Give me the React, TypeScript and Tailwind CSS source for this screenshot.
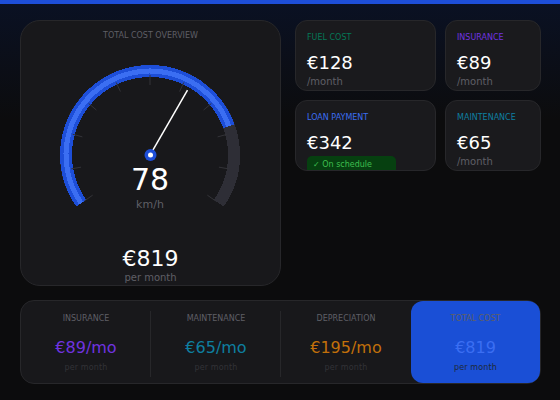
const FONT = "font-['DejaVu_Sans',sans-serif]"

const CX = 100
const CY = 95

function polar(r: number, deg: number) {
  const a = (deg * Math.PI) / 180
  return { x: CX + r * Math.cos(a), y: CY + r * Math.sin(a) }
}

function arc(r: number, from: number, to: number) {
  const s = polar(r, from)
  const e = polar(r, to)
  const large = to - from > 180 ? 1 : 0
  return `M ${s.x} ${s.y} A ${r} ${r} 0 ${large} 1 ${e.x} ${e.y}`
}

const TICKS = Array.from({ length: 11 }, (_, i) => 145 + i * 25)

function Gauge() {
  const end = 145 + 250 * 0.78
  const tip = polar(75, -60)
  return (
    <svg width="200" height="160" viewBox="0 0 200 160" className="block">
      <path d={arc(84, 145, 395)} fill="none" stroke="#2e2e36" strokeWidth="12" shapeRendering="crispEdges" />
      <path d={arc(84, 145, end)} fill="none" stroke="#1d4ed8" strokeWidth="12" shapeRendering="crispEdges" />
      <path d={arc(84, 145, end)} fill="none" stroke="#3b6ef2" strokeWidth="5" shapeRendering="crispEdges" />
      {TICKS.map((t) => {
        const a = polar(70, t)
        const b = polar(80, t)
        return <line key={t} x1={a.x} y1={a.y} x2={b.x} y2={b.y} stroke="#333338" strokeWidth="1" />
      })}
      <line x1={CX} y1={CY} x2={tip.x} y2={tip.y} stroke="#ffffff" strokeWidth="1.5" />
      <circle cx={CX + 0.5} cy={CY} r="6" fill="#1d4ed8" />
      <circle cx={CX + 0.5} cy={CY} r="2.5" fill="#ffffff" />
    </svg>
  )
}

function StatCard({ label, color, value, note, badge, width }: {
  label: string
  color: string
  value: string
  note?: string
  badge?: string
  width: string
}) {
  return (
    <div className={`${width} h-[71px] overflow-hidden rounded-[12px] border border-[#27272a] bg-[#1a1a1d] px-[11px] pt-[12px]`}>
      <div className={`text-[8px] leading-[10px] uppercase ${color}`}>{label}</div>
      <div className="mt-[8px] text-[18px] leading-[24px] text-white">{value}</div>
      {note && <div className="text-[10px] leading-[13px] text-[#5f5f66]">{note}</div>}
      {badge && (
        <div className="mt-[1px] h-[20px] w-[89px] rounded-[5px] bg-[#064010] pl-[6px] pt-[3px] text-[8px] leading-[12px] text-[#3fbf4f]">
          {badge}
        </div>
      )}
    </div>
  )
}

function CostCell({ label, value, color, divider }: { label: string; value: string; color: string; divider?: boolean }) {
  return (
    <div className="relative flex w-[130px] shrink-0 flex-col items-center pt-[13px]">
      <div className="text-[8px] leading-[10px] uppercase text-[#5f5f66]">{label}</div>
      <div className={`mt-[13px] text-[16px] leading-[22px] ${color}`}>{value}</div>
      <div className="mt-[4px] text-[8px] leading-[10px] tracking-[0.15px] text-[#323237]">per month</div>
      {divider && <div className="absolute right-0 top-[10px] h-[66px] w-px bg-[#27272a]" />}
    </div>
  )
}

export default function App() {
  return (
    <div className={`${FONT} h-[400px] w-[560px] overflow-hidden bg-[linear-gradient(180deg,#0a1124_0%,#0c0c0d_30%,#0c0c0d_100%)]`}>
      <div className="h-1 bg-[#1d4ed8]" />
      <div className="flex gap-[14px] pl-5 pt-4">
        <div className="flex h-[266px] w-[261px] flex-col items-center rounded-[20px] border border-[#27272a] bg-[#18181b] pt-[10px]">
          <div className="text-[8px] leading-[10px] uppercase text-[#5f5f66]">Total Cost Overview</div>
          <div className="relative ml-[-1px] mt-[19px]">
            <Gauge />
            <div className="absolute left-0 right-0 top-[102px] flex flex-col items-center">
              <div className="text-[30px] leading-[36px] text-white">78</div>
              <div className="text-[11px] leading-[14px] text-[#5f5f66]">km/h</div>
            </div>
          </div>
          <div className="mt-[25px] text-[22px] leading-[28px] text-white">€819</div>
          <div className="mt-[-2px] text-[10px] leading-[13px] text-[#5f5f66]">per month</div>
        </div>
        <div className="flex flex-col gap-[9px]">
          <div className="flex gap-[9px]">
            <StatCard width="w-[141px]" label="Fuel Cost" color="text-[#047857]" value="€128" note="/month" />
            <StatCard width="w-[96px]" label="Insurance" color="text-[#7033e0]" value="€89" note="/month" />
          </div>
          <div className="flex gap-[9px]">
            <StatCard width="w-[141px]" label="Loan Payment" color="text-[#3b6ef2]" value="€342" badge="✓ On schedule" />
            <StatCard width="w-[96px]" label="Maintenance" color="text-[#0e7fa0]" value="€65" note="/month" />
          </div>
        </div>
      </div>
      <div className="ml-5 mt-[14px] flex h-[84px] w-[521px] rounded-[14px] border border-[#27272a] bg-[#18181b]">
        <CostCell label="Insurance" value="€89/mo" color="text-[#7033e0]" divider />
        <CostCell label="Maintenance" value="€65/mo" color="text-[#0e7fa0]" divider />
        <CostCell label="Depreciation" value="€195/mo" color="text-[#c2700a]" />
        <div className="flex w-[129px] shrink-0 flex-col items-center rounded-[12px] bg-[#1a4fd6] pt-[13px]">
          <div className="text-[8px] leading-[10px] uppercase text-[#5f5f66]">Total Cost</div>
          <div className="mt-[13px] text-[16px] leading-[22px] text-[#3b6ef2]">€819</div>
          <div className="mt-[4px] text-[8px] leading-[10px] tracking-[0.15px] text-[#1f2937]">per month</div>
        </div>
      </div>
    </div>
  )
}
